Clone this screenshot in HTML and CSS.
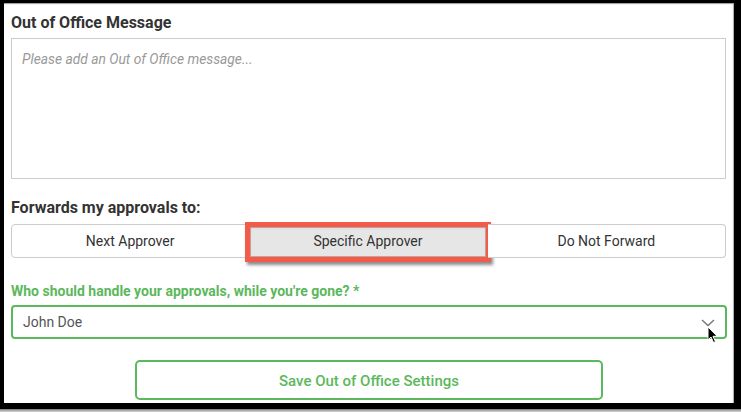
FILE: index.html
```html
<!DOCTYPE html>
<html lang="en">
<head>
<meta charset="utf-8">
<title>Out of Office</title>
<link rel="stylesheet" href="styles.css">
</head>
<body>
<div class="frame">
  <div class="panel">
    <h2 class="title">Out of Office Message</h2>
    <textarea class="message" placeholder="Please add an Out of Office message..."></textarea>

    <h3 class="subtitle">Forwards my approvals to:</h3>
    <div class="segmented">
      <button class="seg">Next Approver</button>
      <button class="seg seg-active">Specific Approver<span class="highlight"></span></button>
      <button class="seg">Do Not Forward</button>
    </div>

    <label class="field-label">Who should handle your approvals, while you're gone? *</label>
    <div class="select">
      <span class="select-value">John Doe</span>
      <svg class="chevron" width="14" height="8" viewBox="0 0 14 8"><path d="M1 1 L7 6.5 L13 1" fill="none" stroke="#777" stroke-width="1.4"/></svg>
      <svg class="cursor" width="12" height="18" viewBox="0 0 12 18"><path d="M1 1 L1 14 L4 11 L6.5 16.5 L8.5 15.6 L6 10.3 L10.2 10.3 Z" fill="#000" stroke="#fff" stroke-width="1"/></svg>
    </div>

    <div class="actions">
      <button class="save">Save Out of Office Settings</button>
    </div>
  </div>
</div>
<div class="bottom-shade"></div>
</body>
</html>
```

FILE: styles.css
```css
html, body {
  margin: 0;
  padding: 0;
  background: #fff;
}

body {
  width: 741px;
  height: 412px;
  overflow: hidden;
  font-family: Roboto, "Liberation Sans", Arial, sans-serif;
  color: #333;
}

.frame {
  box-sizing: border-box;
  width: 741px;
  height: 409px;
  border-style: solid;
  border-color: #000;
  border-width: 3px 7px 6px 4px;
  background: #fff;
  box-shadow: inset 0 2px 1px -1px #999, inset -2px 0 1px -1px #aaa;
}

.bottom-shade {
  height: 3px;
  background: linear-gradient(#777, #ddd);
}

.panel {
  padding: 10px 8px 0 7px;
  display: flex;
  flex-direction: column;
}

.title, .subtitle {
  margin: 0;
  font-size: 16px;
  line-height: 20px;
  font-weight: 700;
  color: #333;
}

.message {
  box-sizing: border-box;
  margin-top: 5px;
  width: 715px;
  height: 141px;
  border: 1px solid #ccc;
  border-radius: 0;
  padding: 10px 10px;
  font-family: Roboto, "Liberation Sans", Arial, sans-serif;
  font-size: 13.8px;
  line-height: 20px;
  resize: none;
  outline: none;
}

.message::placeholder {
  color: #999;
  font-style: italic;
}

.subtitle {
  margin-top: 19px;
}

.segmented {
  margin-top: 6px;
  display: grid;
  grid-template-columns: 1fr 1fr 1fr;
  width: 715px;
}

.seg {
  position: relative;
  box-sizing: border-box;
  height: 34px;
  padding: 6px 8px;
  border: 1px solid #ccc;
  background: #fff;
  font-family: Roboto, "Liberation Sans", Arial, sans-serif;
  font-size: 14px;
  line-height: 20px;
  color: #333;
}

.seg:first-child {
  border-radius: 4px 0 0 4px;
}

.seg:last-child {
  border-radius: 0 4px 4px 0;
  border-left: none;
}

.seg-active {
  border-left: none;
  background: #e6e6e6;
  box-shadow: inset 0 2px 4px rgba(0, 0, 0, 0.1);
}

.highlight {
  position: absolute;
  left: -4px;
  right: -4px;
  top: -3px;
  bottom: -5px;
  border: 5px solid #f25a49;
  box-shadow: 2px 3px 3px rgba(0, 0, 0, 0.45), inset 0 0 0 1px rgba(150, 40, 30, 0.35);
  pointer-events: none;
}

.field-label {
  margin-top: 23px;
  font-size: 14px;
  line-height: 20px;
  font-weight: 700;
  color: #5cb85c;
}

.select {
  position: relative;
  box-sizing: border-box;
  margin-top: 4px;
  width: 716px;
  height: 34px;
  border: 2px solid #5cb85c;
  border-radius: 4px;
  padding: 5px 10px;
  display: flex;
  align-items: center;
  justify-content: space-between;
}

.select-value {
  font-size: 14px;
  line-height: 20px;
  color: #555;
}

.chevron {
  margin-top: 1px;
}

.cursor {
  position: absolute;
  left: 694px;
  top: 19px;
}

.actions {
  margin-top: 21px;
  display: flex;
  padding-left: 124px;
}

.save {
  box-sizing: border-box;
  width: 468px;
  height: 40px;
  padding: 9px 10px;
  border: 2px solid #5cb85c;
  border-radius: 5px;
  background: #fff;
  color: #5cb85c;
  font-family: Roboto, "Liberation Sans", Arial, sans-serif;
  font-size: 15px;
  line-height: 20px;
  font-weight: 500;
}
```
